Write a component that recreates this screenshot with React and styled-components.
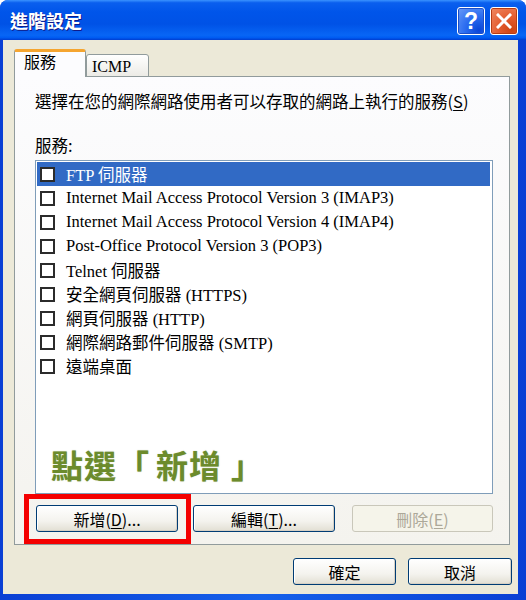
import React from "react";
import styled, { createGlobalStyle } from "styled-components";

const Global = createGlobalStyle`
  html, body { margin: 0; padding: 0; background: #ffffff; }
  * { box-sizing: border-box; }
`;

const CJK = `"Noto Sans CJK TC", "Noto Sans", sans-serif`;
const MIXED = `"Liberation Serif", "Noto Sans CJK TC", serif`;

const Window = styled.div`
  width: 526px;
  height: 600px;
  display: flex;
  flex-direction: column;
  border-radius: 8px 8px 0 0;
  overflow: hidden;
  background: #0b45d8;
`;

const TitleBar = styled.div`
  height: 40px;
  flex: none;
  display: flex;
  align-items: center;
  padding: 0 8px 0 10px;
  background: linear-gradient(
    to bottom,
    #3a93ff 0%,
    #0a5fee 7%,
    #0055ea 30%,
    #0052e6 60%,
    #0866f5 88%,
    #005cf2 94%,
    #003dd0 100%
  );
`;

const Title = styled.div`
  flex: 1;
  color: #fff;
  font-family: ${CJK};
  font-weight: 700;
  font-size: 18px;
  text-shadow: 1px 1px 0 #0f1a89;
`;

const Controls = styled.div`
  display: flex;
  gap: 5px;
  margin-top: 2px;
`;

const CtrlBtn = styled.div`
  width: 28px;
  height: 28px;
  border: 1px solid #fff;
  border-radius: 3px;
  display: flex;
  align-items: center;
  justify-content: center;
  color: #fff;
  font-family: "Liberation Sans", sans-serif;
  font-weight: 700;
  font-size: 23px;
  background: ${(p) =>
    p.$close
      ? "radial-gradient(circle at 80% 85%, #cc4414 0%, #e35a2c 40%, #f08a64 100%)"
      : "radial-gradient(circle at 80% 85%, #0a45d8 0%, #2a6cf0 45%, #6a9cf8 100%)"};
  box-shadow: inset 0 0 0 1px ${(p) => (p.$close ? "#b83c14" : "#1c4ec8")};
`;

const Frame = styled.div`
  flex: 1;
  display: flex;
  padding: 0 9px 6px 3px;
  background: linear-gradient(to right, #0a3fd4, #1560ea 50%, #0a3fd4);
`;

const Body = styled.div`
  flex: 1;
  background: #ece9d8;
  padding: 10px 6px 8px 11px;
  display: flex;
  flex-direction: column;
`;

const TabStrip = styled.div`
  display: flex;
  align-items: flex-end;
  height: 27px;
  position: relative;
  z-index: 2;
  margin-bottom: -1px;
`;

const Tab = styled.div`
  height: ${(p) => (p.$active ? "28px" : "23px")};
  width: ${(p) => p.$w}px;
  border: 1px solid #919b9c;
  border-bottom: ${(p) => (p.$active ? "none" : "1px solid #919b9c")};
  border-top: ${(p) => (p.$active ? "3px solid #f5a530" : "1px solid #919b9c")};
  border-radius: 3px 3px 0 0;
  background: ${(p) =>
    p.$active ? "#fcfcfe" : "linear-gradient(to bottom, #ffffff, #ecebe6)"};
  font-family: ${MIXED};
  font-size: 16px;
  color: #000;
  padding: ${(p) => (p.$active ? "1px 0 0 9px" : "2px 0 0 5px")};
  line-height: 20px;
`;

const Panel = styled.div`
  position: relative;
  height: 469px;
  margin-right: 2px;
  border: 1px solid #919b9c;
  background: linear-gradient(to bottom, #fcfcfe, #f4f3ee);
  padding: 14px 16px 11px 20px;
  display: flex;
  flex-direction: column;
`;

const Label = styled.div`
  font-family: ${CJK};
  font-size: 16.5px;
  line-height: 20px;
  color: #000;
  margin-top: ${(p) => p.$mt || 0}px;
  white-space: nowrap;
`;

const U = styled.span`
  text-decoration: underline;
  text-underline-offset: 2px;
`;

const ListBox = styled.div`
  position: relative;
  margin-top: 5px;
  width: 458px;
  height: 334px;
  border: 1px solid #7f9db9;
  background: #fff;
  padding: 1px 2px 0 1px;
`;

const Row = styled.div`
  height: 24px;
  display: flex;
  align-items: center;
  padding-left: 3px;
  gap: 11px;
  background: ${(p) => (p.$sel ? "#316ac5" : "transparent")};
  color: ${(p) => (p.$sel ? "#fff" : "#000")};
  font-family: ${MIXED};
  font-size: 16.5px;
  white-space: nowrap;
`;

const Check = styled.span`
  width: 15px;
  height: 15px;
  flex: none;
  background: #fff;
  border: 2px solid #2b2b2b;
`;

const Note = styled.div`
  position: absolute;
  left: 15px;
  top: 285px;
  font-family: ${CJK};
  font-weight: 700;
  font-size: 32px;
  line-height: 36px;
  letter-spacing: 1px;
  color: #6c8b2c;
  text-shadow: 0 0 1px rgba(90, 120, 30, 0.5);
  white-space: nowrap;
`;

const Bracket = styled.span`
  display: inline-block;
  margin-left: ${(p) => p.$ml || 0}px;
  margin-right: ${(p) => p.$mr || 0}px;
`;

const ButtonRow = styled.div`
  display: flex;
  margin-top: 11px;
  margin-left: 1px;
  gap: 15px;
`;

const Button = styled.div`
  width: ${(p) => p.$w}px;
  height: 27px;
  border: 1px solid ${(p) => (p.$disabled ? "#c9c7ba" : "#003c74")};
  border-radius: 3px;
  background: ${(p) =>
    p.$disabled
      ? "#f5f4ea"
      : "linear-gradient(to bottom, #ffffff 0%, #f4f3ee 60%, #e2dfd3 100%)"};
  box-shadow: ${(p) =>
    p.$disabled ? "none" : "inset -1px -1px 0 #d6d0c5, inset 1px 1px 0 #fff"};
  display: flex;
  align-items: center;
  justify-content: center;
  font-family: ${CJK};
  font-size: 16px;
  color: ${(p) => (p.$disabled ? "#aca899" : "#000")};
  margin-right: ${(p) => p.$mr || 0}px;
`;

const Footer = styled.div`
  display: flex;
  justify-content: flex-end;
  gap: 12px;
  margin-top: 13px;
`;

const Highlight = styled.div`
  position: absolute;
  left: 9px;
  top: 417px;
  width: 167px;
  height: 50px;
  border: 5px solid #f40000;
  pointer-events: none;
`;

const services = [
  "FTP 伺服器",
  "Internet Mail Access Protocol Version 3 (IMAP3)",
  "Internet Mail Access Protocol Version 4 (IMAP4)",
  "Post-Office Protocol Version 3 (POP3)",
  "Telnet 伺服器",
  "安全網頁伺服器 (HTTPS)",
  "網頁伺服器 (HTTP)",
  "網際網路郵件伺服器 (SMTP)",
  "遠端桌面",
];

export default function App() {
  return (
    <>
      <Global />
      <Window>
        <TitleBar>
          <Title>進階設定</Title>
          <Controls>
            <CtrlBtn>?</CtrlBtn>
            <CtrlBtn $close>
              <svg width="16" height="16" viewBox="0 0 16 16">
                <path d="M2 2 L14 14 M14 2 L2 14" stroke="#fff" strokeWidth="3" strokeLinecap="square" />
              </svg>
            </CtrlBtn>
          </Controls>
        </TitleBar>
        <Frame>
          <Body>
            <TabStrip>
              <Tab $active $w={72}>服務</Tab>
              <Tab $w={63}>ICMP</Tab>
            </TabStrip>
            <Panel>
              <Label>
                選擇在您的網際網路使用者可以存取的網路上執行的服務(<U>S</U>)
              </Label>
              <Label $mt={24}>服務:</Label>
              <ListBox>
                {services.map((s, i) => (
                  <Row key={s} $sel={i === 0}>
                    <Check />
                    <span>{s}</span>
                  </Row>
                ))}
                <Note>
                  點選<Bracket $ml={0} $mr={6}>「</Bracket>新增<Bracket $ml={9}>」</Bracket>
                </Note>
              </ListBox>
              <ButtonRow>
                <Button $w={142}>新增(<U>D</U>)...</Button>
                <Button $w={142} $mr={2}>編輯(<U>T</U>)...</Button>
                <Button $w={141} $disabled>刪除(<U>E</U>)</Button>
              </ButtonRow>
              <Highlight />
            </Panel>
            <Footer>
              <Button $w={103}>確定</Button>
              <Button $w={104}>取消</Button>
            </Footer>
          </Body>
        </Frame>
      </Window>
    </>
  );
}
